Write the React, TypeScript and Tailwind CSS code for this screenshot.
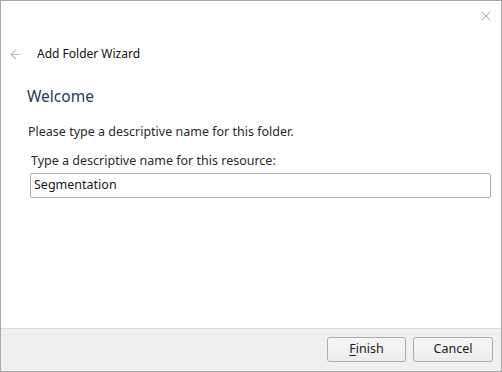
import { X, ArrowLeft } from "lucide-react"

export default function App() {
  return (
    <div
      className="w-[502px] h-[372px] border border-[#a9a9a9] bg-white flex flex-col text-[12.5px] text-[#1a1a1a]"
      style={{ fontFamily: '"Noto Sans", "Open Sans", sans-serif' }}
    >
      <div className="flex-1 flex flex-col">
        <div className="flex justify-end pt-[7px] pr-[7px]">
          <X size={16} strokeWidth={1.1} className="text-[#8a8a8a]" />
        </div>
        <div className="flex items-center mt-[22px] h-[16px]">
          <ArrowLeft size={15} strokeWidth={1.9} className="ml-[7px] text-[#bdbdbd]" />
          <span className="ml-[14px] text-[12px] text-[#111]">Add Folder Wizard</span>
        </div>
        <div className="mt-[24px] ml-[26px] text-[15.5px] leading-[20px] text-[#1f3b5e]">Welcome</div>
        <div className="mt-[18px] ml-[27px] text-[12.5px] leading-[16px] text-[#2b2b2b]">
          Please type a descriptive name for this folder.
        </div>
        <div className="mt-[13px] ml-[30px] text-[12.5px] leading-[16px] text-[#2b2b2b]">
          Type a descriptive name for this resource:
        </div>
        <div className="mt-[4px] ml-[29px] w-[461px] h-[25px] border border-[#acacac] rounded-[2px] flex items-center px-[3px] text-[12.5px] text-[#1a1a1a]">
          Segmentation
        </div>
      </div>
      <div className="h-[43px] border-t border-[#dadada] bg-[#efefef] flex justify-end items-start pt-[8px] pr-[8px] gap-[7px]">
        <button className="w-[79px] h-[25px] border border-[#adadad] rounded-[3px] bg-gradient-to-b from-[#f6f6f6] to-[#ececec] text-[12.5px] text-[#1a1a1a]">
          <span className="underline underline-offset-2">F</span>inish
        </button>
        <button className="w-[80px] h-[25px] border border-[#adadad] rounded-[3px] bg-gradient-to-b from-[#f6f6f6] to-[#ececec] text-[12.5px] text-[#1a1a1a]">
          Cancel
        </button>
      </div>
    </div>
  )
}
